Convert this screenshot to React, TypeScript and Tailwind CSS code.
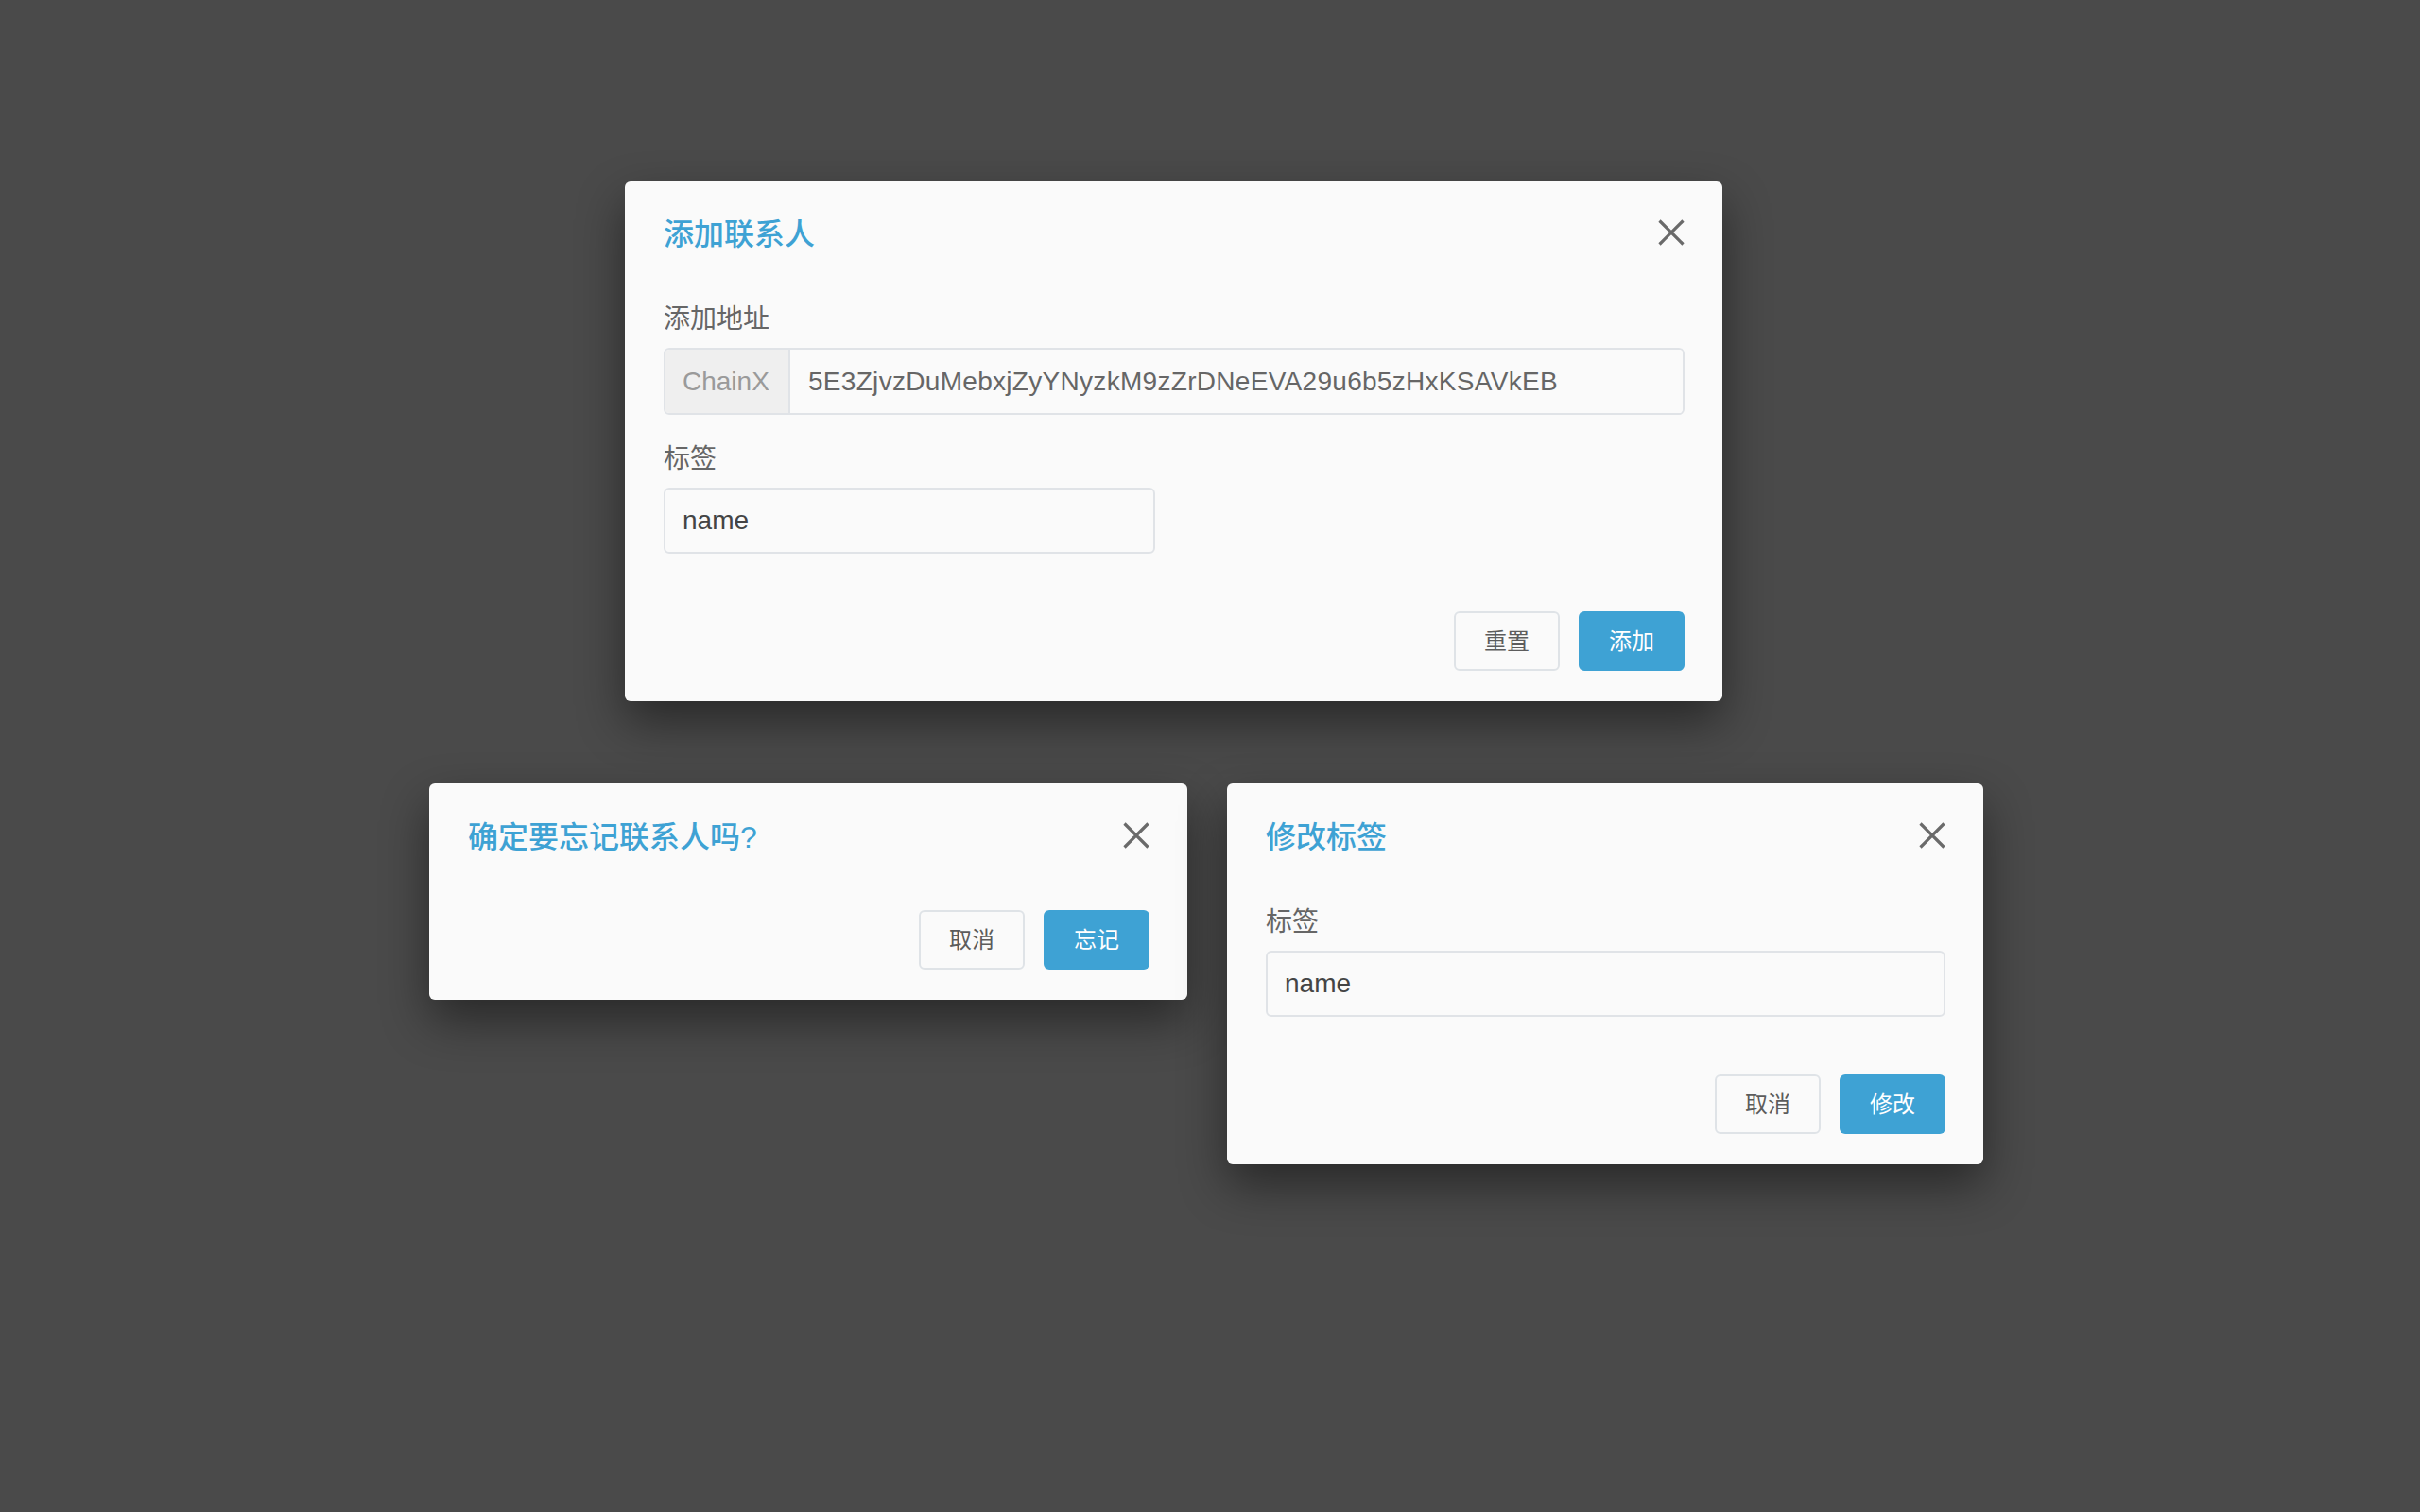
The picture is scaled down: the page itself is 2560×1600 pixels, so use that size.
const font = { fontFamily: '"Liberation Sans", "Noto Sans CJK SC", sans-serif' };

function CloseIcon() {
  return (
    <svg width="28" height="28" viewBox="0 0 28 28" className="shrink-0">
      <path d="M1.5 1.5 L26.5 26.5 M26.5 1.5 L1.5 26.5" stroke="#6a6a6a" strokeWidth="3.2" fill="none" />
    </svg>
  );
}

function Header({ title }: { title: string }) {
  return (
    <div className="flex items-center justify-between">
      <h2 className="text-[32px] leading-[44px] font-medium text-[#3ea2d4]">{title}</h2>
      <button className="-mt-[5px]">
        <CloseIcon />
      </button>
    </div>
  );
}

function Footer({ cancel, ok }: { cancel: string; ok: string }) {
  return (
    <div className="flex justify-end gap-[20px]">
      <button className="w-[112px] h-[63px] rounded-[6px] border-2 border-[#dfe3e7] bg-[#fafafa] text-[24px] text-[#5c5c5c]">
        {cancel}
      </button>
      <button className="w-[112px] h-[63px] rounded-[6px] bg-[#3ea2d4] text-[24px] text-white">{ok}</button>
    </div>
  );
}

function Label({ children }: { children: string }) {
  return <div className="text-[28px] leading-[40px] text-[#666]">{children}</div>;
}

function TextInput({ value, width }: { value: string; width: string }) {
  return (
    <div className={`mt-[10px] h-[70px] ${width} rounded-[6px] border-2 border-[#e0e3e7] bg-[#fafafa] flex items-center px-[18px]`}>
      <span className="text-[28px] text-[#444]">{value}</span>
    </div>
  );
}

export default function App() {
  return (
    <div className="w-full h-[1600px] bg-[#4a4a4a] pt-[192px]" style={font}>
      {/* 添加联系人 */}
      <div className="ml-[661px] w-[1161px] rounded-[6px] bg-[#fafafa] pl-[41px] pr-[40px] pt-[34px] pb-[32px] shadow-[0_22px_50px_rgba(0,0,0,0.45)]">
        <Header title="添加联系人" />
        <div className="mt-[48px]">
          <Label>添加地址</Label>
          <div className="mt-[10px] h-[71px] flex rounded-[6px] border-2 border-[#e0e3e7] overflow-hidden">
            <div className="w-[132px] shrink-0 bg-[#efefef] border-r-2 border-[#e0e3e7] flex items-center pl-[18px]">
              <span className="text-[28px] text-[#9a9a9a]">ChainX</span>
            </div>
            <div className="flex-1 bg-[#fafafa] flex items-center pl-[19px]">
              <span className="text-[28px] tracking-[0.3px] text-[#666]">5E3ZjvzDuMebxjZyYNyzkM9zZrDNeEVA29u6b5zHxKSAVkEB</span>
            </div>
          </div>
        </div>
        <div className="mt-[27px]">
          <Label>标签</Label>
          <TextInput value="name" width="w-[520px]" />
        </div>
        <div className="mt-[61px]">
          <Footer cancel="重置" ok="添加" />
        </div>
      </div>

      <div className="mt-[87px] ml-[454px] flex items-start gap-[42px]">
        {/* 确定要忘记联系人吗? */}
        <div className="w-[802px] rounded-[6px] bg-[#fafafa] pl-[41px] pr-[40px] pt-[35px] pb-[32px] shadow-[0_22px_50px_rgba(0,0,0,0.45)]">
          <Header title="确定要忘记联系人吗?" />
          <div className="mt-[55px]">
            <Footer cancel="取消" ok="忘记" />
          </div>
        </div>

        {/* 修改标签 */}
        <div className="w-[800px] rounded-[6px] bg-[#fafafa] pl-[41px] pr-[40px] pt-[35px] pb-[32px] shadow-[0_22px_50px_rgba(0,0,0,0.45)]">
          <Header title="修改标签" />
          <div className="mt-[48px]">
            <Label>标签</Label>
            <TextInput value="name" width="w-full" />
          </div>
          <div className="mt-[61px]">
            <Footer cancel="取消" ok="修改" />
          </div>
        </div>
      </div>
    </div>
  );
}
